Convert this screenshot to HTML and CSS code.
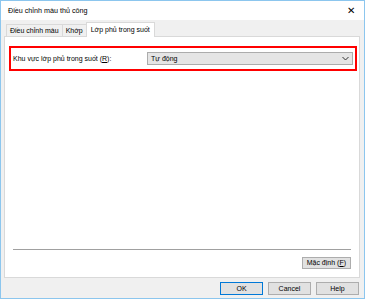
FILE: index.html
```html
<!doctype html>
<html lang="vi">
<head>
    <title>Điều chỉnh màu thủ công</title>
    <link rel="stylesheet" href="styles.css">
</head>
<body>
    <div class="window">
        <div class="titlebar">
            <span class="title">Điều chỉnh màu thủ công</span>
            <span class="close">&#x2715;</span>
        </div>
        <div class="content">
            <div class="tabs">
                <div class="tab">Điều chỉnh màu</div>
                <div class="tab">Khớp</div>
                <div class="tab active">Lớp phủ trong suốt</div>
            </div>
            <div class="panel">
                <div class="group">
                    <label class="label" for="area">Khu vực lớp phủ trong suốt (<u>R</u>):</label>
                    <div class="select" id="area">
                        <span>Tự động</span>
                        <svg class="chevron" width="7" height="5" viewBox="0 0 7 5">
                            <path d="M0.5 1 L3.5 4 L6.5 1" fill="none" stroke="#333" stroke-width="1"/>
                        </svg>
                    </div>
                </div>
                <div class="spacer"></div>
                <div class="separator"></div>
                <div class="panel-actions">
                    <button class="btn">Mặc định (<u>F</u>)</button>
                </div>
            </div>
            <div class="footer">
                <button class="btn wide default">OK</button>
                <button class="btn wide">Cancel</button>
                <button class="btn wide">Help</button>
            </div>
        </div>
    </div>
</body>
</html>
```

FILE: styles.css
```css
html, body {
    margin: 0;
    padding: 0;
}
body {
    font-family: "Liberation Sans", Arial, sans-serif;
    font-size: 7px;
    color: #000;
}
.window {
    width: 365px;
    height: 299px;
    box-sizing: border-box;
    border: 1px solid #8cc6ee;
    background: #f0f0f0;
    display: flex;
    flex-direction: column;
}
.titlebar {
    height: 19px;
    background: #fff;
    display: flex;
    align-items: center;
    justify-content: space-between;
    padding: 0 9px 0 7px;
    font-size: 7.2px;
}
.close {
    font-size: 10px;
}
.content {
    flex: 1;
    display: flex;
    flex-direction: column;
    padding: 1px 4px 0 3px;
}
.tabs {
    display: flex;
    align-items: flex-end;
    height: 15px;
    padding-left: 2px;
}
.tab {
    height: 11px;
    line-height: 11px;
    padding: 0 3px;
    border: 1px solid #d9d9d9;
    border-bottom: none;
    margin-right: -1px;
    background: #f0f0f0;
}
.tab.active {
    height: 14px;
    line-height: 13px;
    background: #fff;
    padding: 0 4px;
    margin-bottom: -1px;
    position: relative;
    z-index: 1;
}
.panel {
    height: 240px;
    background: #fff;
    border: 1px solid #d9d9d9;
    display: flex;
    flex-direction: column;
}
.group {
    margin: 9px 2px 0 4px;
    height: 21px;
    border: 2px solid #f00;
    display: flex;
    align-items: center;
    justify-content: space-between;
    padding: 0 2px 0 2px;
}
.select {
    width: 198px;
    height: 11px;
    border: 1px solid #acacac;
    background: #e5e5e5;
    display: flex;
    align-items: center;
    justify-content: space-between;
    padding: 0 3px 0 3px;
}
.spacer {
    flex: 1;
}
.separator {
    height: 0;
    border-top: 1px solid #a0a0a0;
    border-bottom: 1px solid #fff;
    margin: 0 8px 0 8px;
}
.panel-actions {
    display: flex;
    justify-content: flex-end;
    padding: 6px 8px 8px 0;
}
.btn {
    font-family: "Liberation Sans", Arial, sans-serif;
    font-size: 7px;
    height: 12px;
    line-height: 10px;
    padding: 0 4px;
    border: 1px solid #adadad;
    background: #e1e1e1;
    color: #000;
}
.footer {
    display: flex;
    justify-content: flex-end;
    gap: 5px;
    padding: 4px 1px 0 0;
}
.btn.wide {
    width: 43px;
    height: 13px;
}
.btn.default {
    border: 1px solid #0078d7;
}
```
